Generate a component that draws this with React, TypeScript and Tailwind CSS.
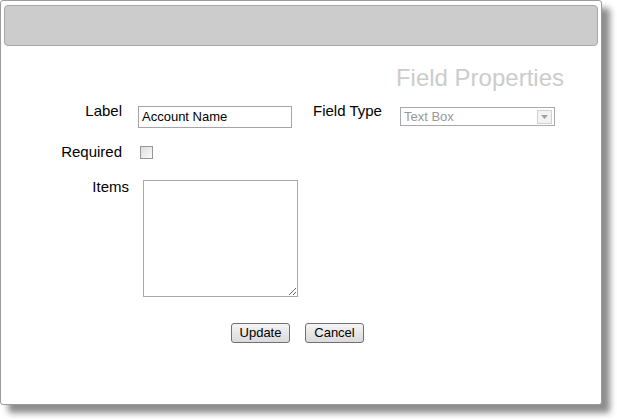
import React from "react";

export default function App() {
  return (
    <div className="w-[617px] h-[419px] bg-white overflow-hidden font-['Liberation_Sans',Arial,sans-serif]">
      <div className="w-[602px] h-[405px] border border-[#9c9c9c] rounded-[3px] bg-white shadow-[8px_8px_6px_rgba(0,0,0,0.45)] flex flex-col">
        <div className="mx-[3px] mt-[4px] h-[41px] bg-[#cccccc] border border-[#a8a8a8] rounded-[4px]" />
        <div className="mt-[18px] pr-[37px] text-right text-[24px] leading-[28px] text-[#cccccc]">
          Field Properties
        </div>

        <div className="mt-[10px] flex items-start text-[15px] leading-[18px] text-black">
          <div className="w-[121px] text-right">Label</div>
          <div className="mt-[4px] ml-[16px] w-[154px] h-[22px] border border-[#a5a5a5] px-[3px] text-[13px] leading-[20px] text-black">
            Account Name
          </div>
          <div className="ml-[21px] w-[87px]">Field Type</div>
          <div className="mt-[5px] w-[155px] h-[19px] border border-[#a9a9a9] flex items-center justify-between pl-[3px] pr-[2px]">
            <span className="text-[13px] leading-[17px] text-[#999999]">Text Box</span>
            <span className="w-[15px] h-[14px] border border-[#d0d0d0] bg-[#f3f3f3] flex items-center justify-center">
              <svg width="7" height="4" viewBox="0 0 7 4">
                <path d="M0 0 L7 0 L3.5 4 Z" fill="#a0a0a0" />
              </svg>
            </span>
          </div>
        </div>

        <div className="mt-[15px] flex items-start text-[15px] leading-[18px] text-black">
          <div className="w-[121px] text-right">Required</div>
          <span className="mt-[3px] ml-[18px] w-[13px] h-[13px] border border-[#979797] bg-gradient-to-br from-[#dcdcdc] to-[#fbfbfb]" />
        </div>

        <div className="mt-[17px] flex items-start text-[15px] leading-[18px] text-black">
          <div className="w-[128px] text-right">Items</div>
          <textarea className="mt-[2px] ml-[14px] w-[155px] h-[117px] border border-[#a9a9a9] outline-none" />
        </div>

        <div className="mt-[26px] pl-[230px] flex gap-[15px]">
          <button className="w-[59px] h-[20px] border border-[#707070] rounded-[3px] bg-gradient-to-b from-[#f4f4f4] to-[#dadada] text-[13px] leading-[16px] text-black">
            Update
          </button>
          <button className="w-[59px] h-[20px] border border-[#707070] rounded-[3px] bg-gradient-to-b from-[#f4f4f4] to-[#dadada] text-[13px] leading-[16px] text-black">
            Cancel
          </button>
        </div>
      </div>
    </div>
  );
}
